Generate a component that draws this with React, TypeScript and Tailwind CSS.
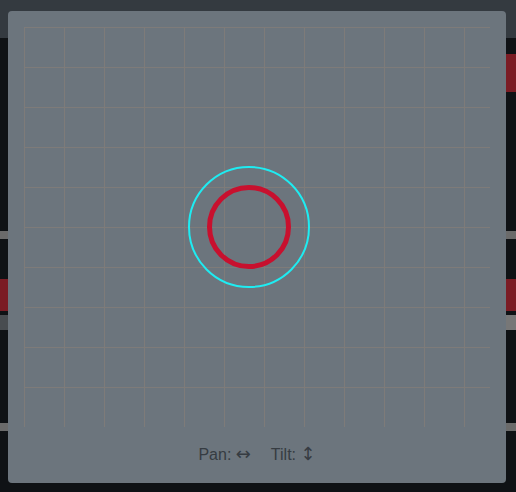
import React from "react";

export default function App() {
  return (
    <div className="relative h-[492px] w-[516px] overflow-hidden bg-[#0f1215] font-['Liberation_Sans',Arial,sans-serif]">
      <div className="h-[38px] bg-[#343a40]" />
      <div className="flex h-[454px] justify-between">
        <div className="flex w-[8px] flex-col">
          <div className="mt-[193px] h-[8px] bg-[#6b6b6b]" />
          <div className="mt-[40px] h-[32px] bg-[#7b1c24]" />
          <div className="mt-[4px] h-[15px] bg-[#484c50]" />
          <div className="mt-[93px] h-[8px] bg-[#6b6b6b]" />
        </div>
        <div className="flex w-[10px] flex-col">
          <div className="mt-[16px] h-[38px] bg-[#7b1c24]" />
          <div className="mt-[139px] h-[8px] bg-[#6b6b6b]" />
          <div className="mt-[40px] h-[32px] bg-[#7b1c24]" />
          <div className="mt-[4px] h-[15px] bg-[#777777]" />
          <div className="mt-[93px] h-[8px] bg-[#6b6b6b]" />
        </div>
      </div>

      <div className="absolute left-[8px] top-[11px] w-[498px] rounded-[4px] bg-[#6c757d] p-4">
        <div className="relative h-[400px] bg-[linear-gradient(to_right,#7e7b79_1px,transparent_1px),linear-gradient(to_bottom,#7e7b79_1px,transparent_1px)] bg-[size:40px_40px]">
          <svg
            className="absolute left-[164px] top-[139px]"
            width="122"
            height="122"
            viewBox="0 0 122 122"
          >
            <circle cx="61" cy="61" r="60" fill="none" stroke="#1eecf2" strokeWidth="2" />
            <circle cx="61" cy="61" r="39.5" fill="none" stroke="#c8102e" strokeWidth="5" />
          </svg>
        </div>
        <div className="flex h-[40px] items-start justify-center gap-5 pt-4 text-[16px] leading-6 text-[#363c42]">
          <span>
            Pan: <span className="font-['DejaVu_Sans',sans-serif] text-[18px] leading-none">↔</span>
          </span>
          <span>
            Tilt: <span className="font-['DejaVu_Sans',sans-serif] text-[18px] leading-none">↕</span>
          </span>
        </div>
      </div>
    </div>
  );
}
